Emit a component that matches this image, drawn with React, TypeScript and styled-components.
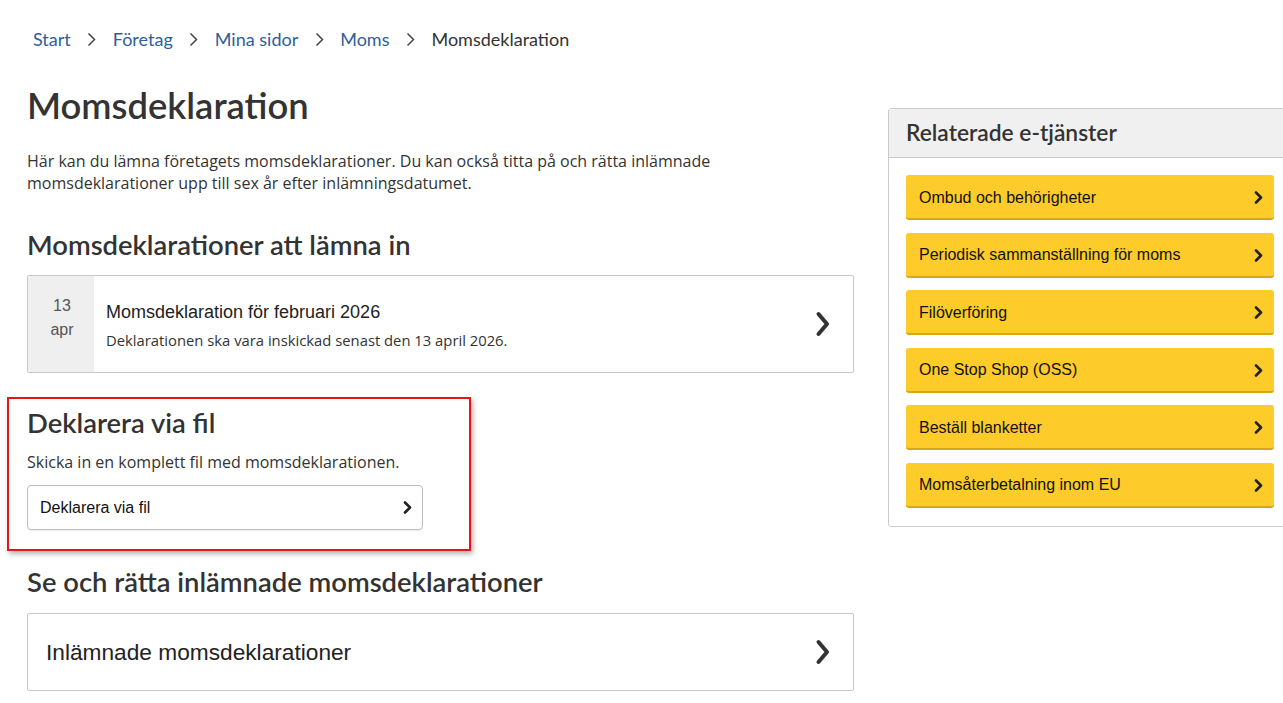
import React from "react";
import styled, { createGlobalStyle } from "styled-components";

const Global = createGlobalStyle`
  html, body { margin: 0; padding: 0; background: #fff; overflow-x: hidden; }
  body { font-family: "Open Sans", sans-serif; color: #333; }
  * { box-sizing: border-box; }
`;

const Page = styled.div`
  display: flex;
  flex-direction: column;
  padding: 23px 0 0 27px;
  width: 1320px;
`;

const Crumbs = styled.nav`
  display: flex;
  align-items: center;
  font-family: Lato, sans-serif;
  font-size: 18px;
  height: 32px;
  padding-left: 6px;
`;

const Crumb = styled.a<{ $current?: boolean }>`
  color: ${(p) => (p.$current ? "#333" : "#2f5e9a")};
  text-decoration: none;
`;

const Sep = styled.span`
  display: inline-flex;
  width: 42px;
  justify-content: center;
  color: #555;
`;

const Layout = styled.div`
  display: flex;
  align-items: flex-start;
  gap: 34px;
  margin-top: 25px;
`;

const Main = styled.main`
  width: 827px;
  display: flex;
  flex-direction: column;
`;

const H1 = styled.h1`
  font-family: Lato, sans-serif;
  font-weight: 600;
  font-size: 36.4px;
  line-height: 50px;
  margin: 0;
  color: #333;
`;

const Lead = styled.p`
  font-size: 16px;
  line-height: 22px;
  max-width: 700px;
  margin: 20px 0 0;
  color: #333;
`;

const H2 = styled.h2`
  font-family: Lato, sans-serif;
  font-weight: 600;
  font-size: 27.4px;
  line-height: 34px;
  margin: 0;
  color: #333;
`;

const SectionTitle = styled(H2)`
  margin-top: 34px;
  margin-bottom: 13px;
`;

const Card = styled.a<{ $tall?: boolean }>`
  display: flex;
  align-items: stretch;
  border: 1px solid #c8c8c8;
  border-radius: 2px;
  min-height: ${(p) => (p.$tall ? "98px" : "78px")};
  color: #333;
  text-decoration: none;
  background: #fff;
`;

const DateCol = styled.div`
  width: 66px;
  background: #efefef;
  display: flex;
  flex-direction: column;
  align-items: center;
  padding-top: 18px;
  padding-left: 2px;
  font-family: "Liberation Sans", Arial, sans-serif;
  font-size: 16px;
  line-height: 24px;
  color: #555;
`;

const CardBody = styled.div<{ $pad: number }>`
  flex: 1;
  display: flex;
  flex-direction: column;
  justify-content: center;
  padding-left: ${(p) => p.$pad}px;
`;

const CardTitle = styled.div<{ $size: number }>`
  font-family: "Liberation Sans", Arial, sans-serif;
  font-size: ${(p) => p.$size}px;
  line-height: 26px;
  color: #222;
`;

const CardSub = styled.div`
  font-size: 14.8px;
  line-height: 20px;
  margin-top: 5px;
  color: #333;
`;

const ChevronCell = styled.div`
  width: 40px;
  display: flex;
  align-items: center;
  justify-content: flex-start;
  padding-left: 2px;
`;

const Highlight = styled.section`
  margin: 24px 0 0 -20px;
  width: 464px;
  border: 2px solid #e8141b;
  box-shadow: 2px 3px 5px rgba(0, 0, 0, 0.3);
  padding: 7px 0 19px 18px;
`;

const FileText = styled.p`
  font-size: 16px;
  line-height: 22px;
  margin: 11px 0 0;
  color: #333;
`;

const FileButton = styled.a`
  margin-top: 12px;
  display: flex;
  align-items: center;
  justify-content: space-between;
  width: 396px;
  height: 45px;
  border: 1px solid #bdbdbd;
  border-radius: 4px;
  padding: 0 10px 0 12px;
  font-family: "Liberation Sans", Arial, sans-serif;
  font-size: 16px;
  color: #111;
  text-decoration: none;
  box-shadow: 0 1px 1px rgba(0,0,0,0.08);
`;

const LastTitle = styled(H2)`
  margin-top: 14px;
  margin-bottom: 14px;
`;

const Aside = styled.aside`
  width: 400px;
  margin-top: 28px;
  border: 1px solid #ccc;
  border-radius: 3px;
  background: #fff;
`;

const AsideHead = styled.div`
  background: #f0f0f0;
  border-bottom: 1px solid #ccc;
  height: 49px;
  display: flex;
  align-items: center;
  padding: 0 0 3px 17px;
  font-family: Lato, sans-serif;
  font-weight: 600;
  font-size: 22.8px;
  color: #333;
`;

const AsideList = styled.div`
  display: flex;
  flex-direction: column;
  gap: 12.5px;
  padding: 17px 9px 18px 17px;
`;

const YellowButton = styled.a`
  display: flex;
  align-items: center;
  justify-content: space-between;
  height: 45px;
  width: 368px;
  background: #fdcb2a;
  border-bottom: 2px solid #d6a816;
  border-radius: 3px;
  padding: 2px 11px 0 13px;
  font-family: "Liberation Sans", Arial, sans-serif;
  font-size: 16px;
  color: #111;
  text-decoration: none;
`;

const SmallChevron = () => (
  <svg width="9" height="13" viewBox="0 0 9 13" aria-hidden>
    <polyline points="2,1.5 7,6.5 2,11.5" fill="none" stroke="#222" strokeWidth="2.6" strokeLinecap="round" strokeLinejoin="round" />
  </svg>
);

const BigChevron = () => (
  <svg width="16" height="26" viewBox="0 0 16 26" aria-hidden>
    <polyline points="3.5,3 12,13 3.5,23" fill="none" stroke="#333" strokeWidth="4" strokeLinecap="round" strokeLinejoin="round" />
  </svg>
);

const CrumbArrow = () => (
  <svg width="9" height="15" viewBox="0 0 9 15" aria-hidden>
    <polyline points="1.5,1.5 7.5,7.5 1.5,13.5" fill="none" stroke="#444" strokeWidth="1.5" />
  </svg>
);

const services = [
  "Ombud och behörigheter",
  "Periodisk sammanställning för moms",
  "Filöverföring",
  "One Stop Shop (OSS)",
  "Beställ blanketter",
  "Momsåterbetalning inom EU",
];

const crumbs = ["Start", "Företag", "Mina sidor", "Moms"];

export default function App() {
  return (
    <>
      <Global />
      <Page>
        <Crumbs>
          {crumbs.map((c) => (
            <React.Fragment key={c}>
              <Crumb href="#">{c}</Crumb>
              <Sep>
                <CrumbArrow />
              </Sep>
            </React.Fragment>
          ))}
          <Crumb $current>Momsdeklaration</Crumb>
        </Crumbs>
        <Layout>
          <Main>
            <H1>Momsdeklaration</H1>
            <Lead>
              Här kan du lämna företagets momsdeklarationer. Du kan också titta på och rätta inlämnade
              momsdeklarationer upp till sex år efter inlämningsdatumet.
            </Lead>
            <SectionTitle>Momsdeklarationer att lämna in</SectionTitle>
            <Card href="#" $tall>
              <DateCol>
                <span>13</span>
                <span>apr</span>
              </DateCol>
              <CardBody $pad={12}>
                <CardTitle $size={18}>Momsdeklaration för februari 2026</CardTitle>
                <CardSub>Deklarationen ska vara inskickad senast den 13 april 2026.</CardSub>
              </CardBody>
              <ChevronCell>
                <BigChevron />
              </ChevronCell>
            </Card>
            <Highlight>
              <H2>Deklarera via fil</H2>
              <FileText>Skicka in en komplett fil med momsdeklarationen.</FileText>
              <FileButton href="#">
                Deklarera via fil
                <SmallChevron />
              </FileButton>
            </Highlight>
            <LastTitle>Se och rätta inlämnade momsdeklarationer</LastTitle>
            <Card href="#">
              <CardBody $pad={18}>
                <CardTitle $size={22.7}>Inlämnade momsdeklarationer</CardTitle>
              </CardBody>
              <ChevronCell>
                <BigChevron />
              </ChevronCell>
            </Card>
          </Main>
          <Aside>
            <AsideHead>Relaterade e-tjänster</AsideHead>
            <AsideList>
              {services.map((s) => (
                <YellowButton href="#" key={s}>
                  {s}
                  <SmallChevron />
                </YellowButton>
              ))}
            </AsideList>
          </Aside>
        </Layout>
      </Page>
    </>
  );
}
